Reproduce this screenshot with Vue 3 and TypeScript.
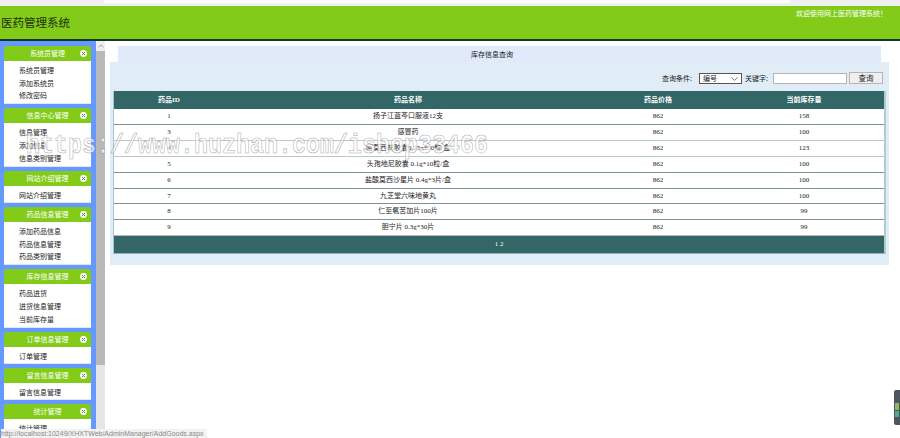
<script setup lang="ts">
interface Group { title: string; items: string[]; bodyClass: string }
const groups: Group[] = [
  { title: '系统员管理', items: ['系统员管理', '添加系统员', '修改密码'], bodyClass: 'b3' },
  { title: '信息中心管理', items: ['信息管理', '添加信息', '信息类别管理'], bodyClass: 'b3' },
  { title: '网站介绍管理', items: ['网站介绍管理'], bodyClass: 'b1' },
  { title: '药品信息管理', items: ['添加药品信息', '药品信息管理', '药品类别管理'], bodyClass: 'b3' },
  { title: '库存信息管理', items: ['药品进货', '进货信息管理', '当前库存量'], bodyClass: 'b3' },
  { title: '订单信息管理', items: ['订单管理'], bodyClass: 'b1' },
  { title: '留言信息管理', items: ['留言信息管理'], bodyClass: 'b1' },
  { title: '统计管理', items: ['统计管理'], bodyClass: 'b1' },
]
const rows = [
  ['1', '扬子江蓝芩口服液12支', '862', '158'],
  ['3', '感冒药', '862', '100'],
  ['4', '阿莫西林胶囊0.25g*50粒/盒', '862', '123'],
  ['5', '头孢地尼胶囊 0.1g*10粒/盒', '862', '100'],
  ['6', '盐酸莫西沙星片 0.4g*3片/盒', '862', '100'],
  ['7', '九芝堂六味地黄丸', '862', '100'],
  ['8', '仁至氨苦加片100片', '862', '99'],
  ['9', '胆宁片 0.3g*30片', '862', '99'],
]
</script>

<template>
  <div class="page">
    <div class="chrome"><div class="chrome-white"></div></div>
    <header class="top">
      <h1 class="title">医药管理系统</h1>
      <p class="welcome">欢迎使用网上医药管理系统！</p>
    </header>
    <div class="body">
      <aside class="side">
        <section v-for="g in groups" :key="g.title" class="group">
          <div class="group-head">
            <span class="group-title">{{ g.title }}</span>
            <svg class="group-icon" width="7" height="7" viewBox="0 0 7 7">
              <circle cx="3.5" cy="3.5" r="3.4" fill="#fff" />
              <path d="M2 2l3 3M5 2l-3 3" stroke="#6f7f5c" stroke-width="1" />
            </svg>
          </div>
          <ul class="group-body" :class="g.bodyClass">
            <li v-for="i in g.items" :key="i">{{ i }}</li>
          </ul>
        </section>
      </aside>
      <div class="scroll">
        <div class="scroll-btn">
          <svg width="6" height="4" viewBox="0 0 6 4"><path d="M0.5 3.2L3 1l2.5 2.2" fill="none" stroke="#a0a0a0" stroke-width="1" /></svg>
        </div>
        <div class="scroll-thumb"></div>
      </div>
      <main class="main">
        <div class="heading">库存信息查询</div>
        <div class="panel">
          <form class="search" @submit.prevent>
            <label class="lbl">查询条件:</label>
            <div class="sel">
              <span>编号</span>
              <svg class="chev" width="7" height="4" viewBox="0 0 7 4"><path d="M0.5 0.5L3.5 3.3L6.5 0.5" fill="none" stroke="#555" stroke-width="0.8" /></svg>
            </div>
            <label class="lbl kw">关键字:</label>
            <input class="inp" type="text" />
            <button class="btn" type="button">查询</button>
          </form>
          <table class="grid">
            <colgroup>
              <col class="c1" /><col class="c2" /><col class="c3" /><col class="c4" />
            </colgroup>
            <thead>
              <tr><th>药品ID</th><th>药品名称</th><th>药品价格</th><th>当前库存量</th></tr>
            </thead>
            <tbody>
              <tr v-for="r in rows" :key="r[0]">
                <td v-for="(c, i) in r" :key="i">{{ c }}</td>
              </tr>
            </tbody>
            <tfoot>
              <tr><td colspan="4">1 2</td></tr>
            </tfoot>
          </table>
        </div>
      </main>
    </div>
    <div class="watermark">https://www.huzhan.com/ishop33466</div>
    <div class="status">http://localhost:10249/XHXTWeb/AdminManager/AddGoods.aspx</div>
    <div class="widget"><i class="w1"></i><i class="w2"></i><i class="w3"></i></div>
  </div>
</template>

<style scoped>
.page {
  position: relative;
  width: 900px;
  height: 438px;
  overflow: hidden;
  background: #fff;
  display: flex;
  flex-direction: column;
  font-family: "Liberation Serif", "Noto Sans CJK SC", serif;
  font-size: 7px;
  color: #222;
}
.chrome {
  height: 6px;
  flex: none;
  background: #f0f0f0;
}
.chrome-white {
  margin-left: 104px;
  width: 686px;
  height: 3px;
  background: #fff;
}
.top {
  flex: none;
  height: 33px;
  background: #82cb19;
  border-bottom: 2px solid #0d3a2a;
  display: flex;
  justify-content: space-between;
}
.title {
  margin: 9px 0 0 1px;
  font-family: "Noto Sans CJK SC", sans-serif;
  font-size: 11.5px;
  line-height: 14px;
  font-weight: 400;
  color: #24300f;
}
.welcome {
  margin: 3px 13px 0 0;
  font-family: "Noto Sans CJK SC", sans-serif;
  font-size: 7px;
  line-height: 9px;
  color: #fff;
}
.body {
  flex: 1;
  display: flex;
  min-height: 0;
}
.side {
  flex: none;
  width: 87px;
  padding: 5px 5px 0 4px;
  background: #6699ff;
  overflow: hidden;
}
.group {
  margin-bottom: 4px;
}
.group-head {
  position: relative;
  height: 15px;
  border-radius: 3px 3px 0 0;
  background: #82cb19;
  color: #fff;
  line-height: 15px;
  text-align: center;
  font-family: "Noto Sans CJK SC", sans-serif;
  font-size: 7px;
}
.group-title {
  display: block;
}
.group-icon {
  position: absolute;
  right: 4px;
  top: 4px;
}
.group-body {
  margin: 0;
  padding: 3px 0 0 15px;
  list-style: none;
  background: #fff;
  font-family: "Noto Sans CJK SC", sans-serif;
  font-size: 7px;
  line-height: 12.6px;
  color: #222;
  border-bottom: 1px solid #dfe8f5;
}
.b3 { height: 39.4px; }
.b1 { height: 13.2px; }
.scroll {
  flex: none;
  width: 9px;
  margin-right: 1px;
  background: #e6e6e6;
}
.scroll-btn {
  height: 10px;
  background: #efefef;
  display: flex;
  align-items: center;
  justify-content: center;
}
.scroll-thumb {
  height: 314px;
  background: #b9b9b9;
}
.main {
  flex: none;
  width: 779px;
  margin-left: 4px;
  padding-top: 5px;
}
.heading {
  margin: 0 8px;
  padding-right: 15px;
  height: 16px;
  background: #e0eafb;
  text-align: center;
  font-family: "Noto Sans CJK SC", sans-serif;
  font-size: 7px;
  line-height: 16px;
  color: #222;
}
.panel {
  height: 203px;
  box-sizing: border-box;
  padding: 0 3px;
  background: #e0edf7;
}
.search {
  height: 29px;
  display: flex;
  align-items: center;
  justify-content: flex-end;
  padding: 3px 3px 0 0;
  box-sizing: border-box;
  font-family: "Noto Sans CJK SC", sans-serif;
  font-size: 7px;
}
.lbl {
  margin-right: 7px;
}
.kw {
  margin: 0 5px 0 3px;
}
.sel {
  position: relative;
  width: 43px;
  height: 11px;
  box-sizing: border-box;
  padding-left: 3px;
  border: 1px solid #555;
  background: #fff;
  font-size: 7px;
  line-height: 8px;
}
.chev {
  position: absolute;
  right: 3px;
  top: 3px;
}
.inp {
  width: 74px;
  height: 11px;
  box-sizing: border-box;
  padding: 0;
  border: 1px solid #b5b5b5;
  background: #fff;
}
.btn {
  margin-left: 2px;
  width: 34px;
  height: 12px;
  box-sizing: border-box;
  padding: 0;
  border: 1px solid #b5b5b5;
  background: #efefef;
  font-family: "Noto Sans CJK SC", sans-serif;
  font-size: 7.5px;
  line-height: 10px;
  color: #222;
}
.grid {
  width: 773px;
  table-layout: fixed;
  border-collapse: separate;
  border-spacing: 0;
  border-left: 1px solid #a9c5cc;
  border-right: 2px solid #aecbd6;
  border-bottom: 1px solid #8fb0b4;
  background: #fff;
  text-align: center;
}
.c1 { width: 110px; }
.c2 { width: 368px; }
.c3 { width: 132px; }
.grid th {
  height: 18px;
  padding: 0;
  background: #336666;
  color: #fff;
  font-weight: 700;
  font-size: 7px;
  line-height: 18px;
  font-family: "Liberation Serif", "Noto Sans CJK SC", serif;
}
.grid td {
  height: 15px;
  padding: 0;
  border-bottom: 1px solid #7b9393;
  line-height: 15px;
  font-size: 7px;
  color: #222;
  overflow: hidden;
  white-space: nowrap;
}
.grid tbody tr:nth-child(2) td,
.grid tbody tr:nth-child(3) td {
  border-bottom-color: #b9cbc9;
}
.grid tbody tr:nth-child(6) td {
  height: 14px;
  line-height: 14px;
}
.grid tbody tr:last-child td {
  border-bottom-color: #b8b8b8;
}
.grid tfoot td {
  height: 17px;
  background: #336666;
  color: #fff;
  border-bottom: 0;
  line-height: 17px;
}
.watermark {
  position: absolute;
  left: 26px;
  top: 131px;
  font-family: "Liberation Mono", monospace;
  font-weight: 700;
  font-size: 23.33px;
  line-height: 32px;
  white-space: nowrap;
  transform: scaleY(1.15);
  transform-origin: 0 22px;
  color: rgba(255, 255, 255, 0.7);
  -webkit-text-stroke: 0.5px rgba(125, 125, 125, 0.7);
  pointer-events: none;
}
.status {
  position: absolute;
  left: 1px;
  bottom: 0;
  width: 206px;
  height: 9px;
  background: #f2f2f2;
  color: #888;
  font-family: "Liberation Sans", sans-serif;
  font-size: 7px;
  line-height: 9px;
  white-space: nowrap;
  overflow: hidden;
}
.widget {
  position: absolute;
  right: 0;
  top: 390px;
  width: 6px;
  height: 35px;
  box-sizing: border-box;
  padding-top: 12px;
  border-radius: 2px 0 0 2px;
  background: #4c5560;
  display: flex;
  flex-direction: column;
  align-items: center;
  gap: 1px;
}
.widget i {
  display: block;
  width: 4px;
}
.w1 { height: 0; }
.w2 { height: 7px; background: #94b55a; }
.w3 { height: 6px; background: #4fae8a; }
</style>
